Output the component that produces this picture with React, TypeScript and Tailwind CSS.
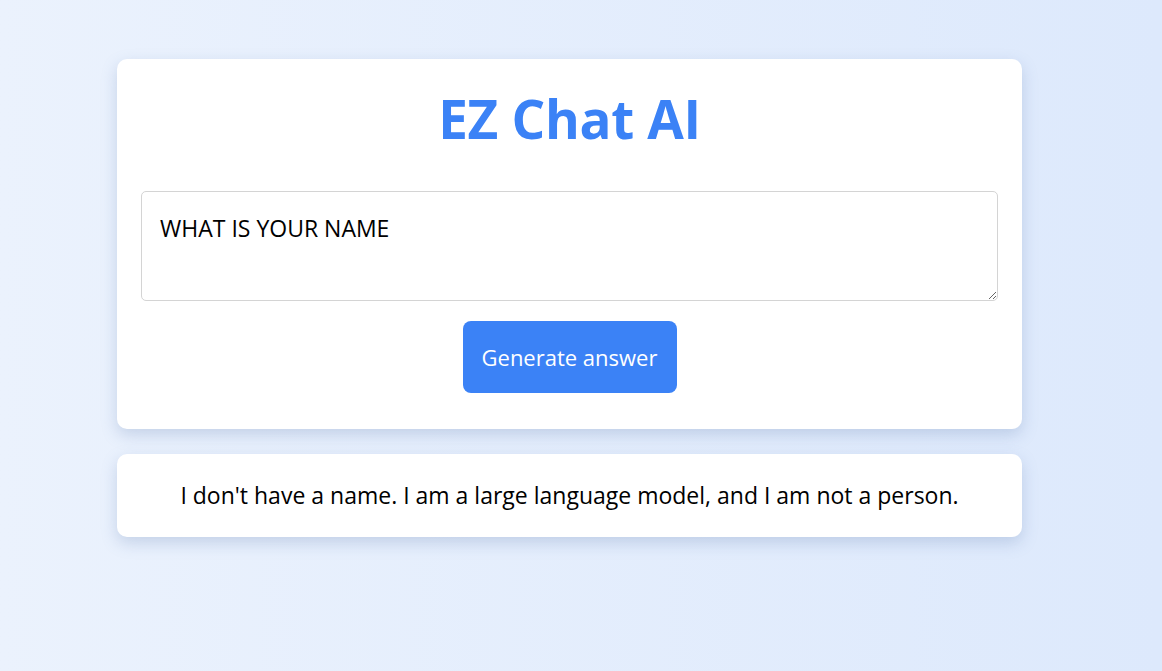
import React from "react";

export default function App() {
  return (
    <div
      className="min-h-[671px] w-full bg-gradient-to-r from-[#ebf2fd] to-[#dde9fc] pt-[59px] pl-[117px] pr-[140px]"
      style={{ fontFamily: '"Open Sans", "Noto Sans", sans-serif' }}
    >
      <div className="flex w-[905px] flex-col items-center rounded-[10px] bg-white px-6 pt-[24px] pb-9 shadow-[0_6px_16px_rgba(100,130,180,0.28)]">
        <h1 className="text-[53px] font-bold leading-[72px] tracking-[-0.3px] text-[#3b82f6]">
          EZ Chat AI
        </h1>
        <textarea
          className="mt-[36px] h-[110px] w-full resize-y rounded-[5px] border border-[#d4d4d4] px-[18px] py-[20px] text-[23px] leading-[32px] text-black outline-none"
          defaultValue="WHAT IS YOUR NAME"
        />
        <button className="mt-[20px] h-[72px] w-[214px] rounded-[8px] bg-[#3b82f6] text-[22px] text-white">
          Generate answer
        </button>
      </div>
      <div className="mt-[25px] flex h-[83px] w-[905px] items-center justify-center rounded-[10px] bg-white shadow-[0_6px_16px_rgba(100,130,180,0.28)]">
        <p className="text-[23px] text-black">
          I don't have a name. I am a large language model, and I am not a person.
        </p>
      </div>
    </div>
  );
}
